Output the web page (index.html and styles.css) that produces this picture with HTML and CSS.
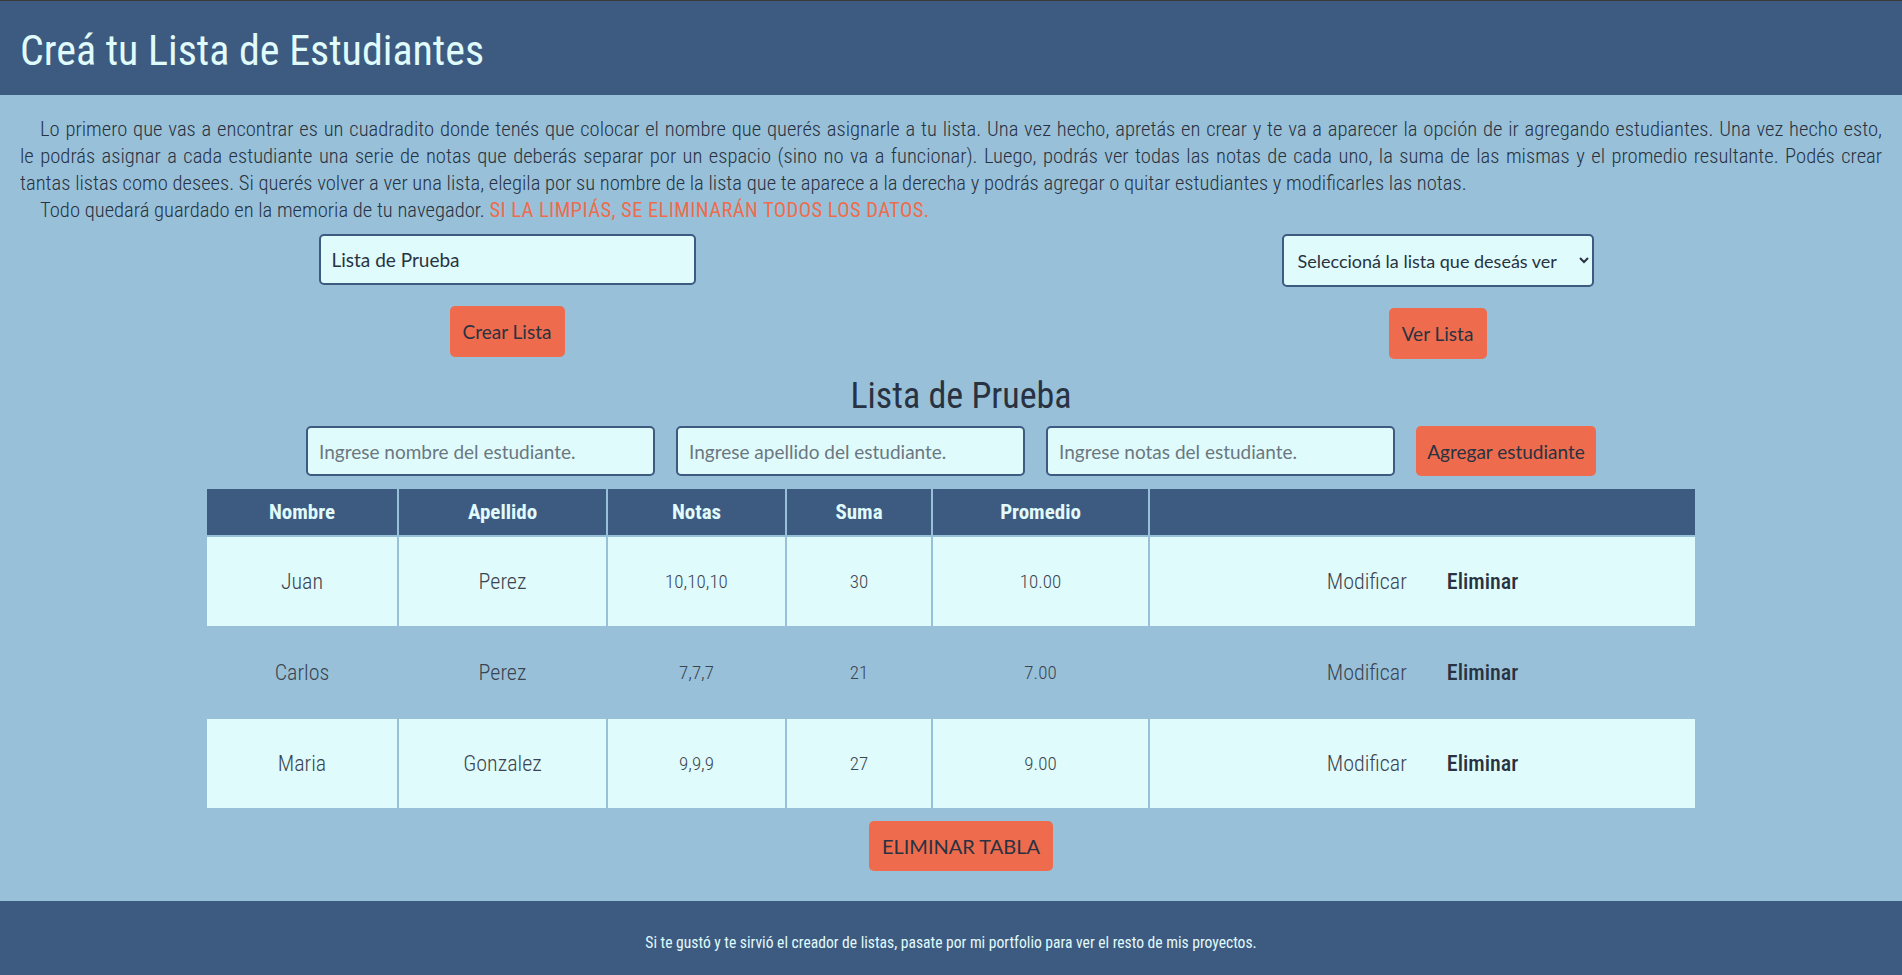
FILE: index.html
```html
<!DOCTYPE html>
<html lang="es">
<head>
<meta charset="utf-8">
<title>Creá tu Lista de Estudiantes</title>
<link rel="stylesheet" href="styles.css">
</head>
<body>
<header class="top">
  <h1 class="title">Creá tu Lista de Estudiantes</h1>
</header>
<main class="main">
  <section class="intro">
    <p class="para"><span class="line">Lo primero que vas a encontrar es un cuadradito donde tenés que colocar el nombre que querés asignarle a tu lista. Una vez hecho, apretás en crear y te va a aparecer la opción de ir agregando estudiantes. Una vez hecho esto,</span> <span class="line">le podrás asignar a cada estudiante una serie de notas que deberás separar por un espacio (sino no va a funcionar). Luego, podrás ver todas las notas de cada uno, la suma de las mismas y el promedio resultante. Podés crear</span> <span class="line last">tantas listas como desees. Si querés volver a ver una lista, elegila por su nombre de la lista que te aparece a la derecha y podrás agregar o quitar estudiantes y modificarles las notas.</span></p>
    <p class="para"><span class="line last">Todo quedará guardado en la memoria de tu navegador. <span class="warn">SI LA LIMPIÁS, SE ELIMINARÁN TODOS LOS DATOS.</span></span></p>
  </section>

  <section class="controls">
    <div class="col">
      <input class="field field-list" type="text" value="Lista de Prueba">
      <button class="btn btn-create">Crear Lista</button>
    </div>
    <div class="col">
      <select class="field field-select">
        <option>Seleccioná la lista que deseás ver</option>
      </select>
      <button class="btn btn-view">Ver Lista</button>
    </div>
  </section>

  <h2 class="list-title">Lista de Prueba</h2>

  <div class="add-row">
    <input class="field field-student" type="text" placeholder="Ingrese nombre del estudiante.">
    <input class="field field-student" type="text" placeholder="Ingrese apellido del estudiante.">
    <input class="field field-student" type="text" placeholder="Ingrese notas del estudiante.">
    <button class="btn btn-add">Agregar estudiante</button>
  </div>

  <table class="grid">
    <thead>
      <tr>
        <th class="c1">Nombre</th>
        <th class="c2">Apellido</th>
        <th class="c3">Notas</th>
        <th class="c4">Suma</th>
        <th class="c5">Promedio</th>
        <th class="c6"></th>
      </tr>
    </thead>
    <tbody>
      <tr class="odd">
        <td>Juan</td><td>Perez</td><td class="num">10,10,10</td><td class="num">30</td><td class="num">10.00</td>
        <td><div class="actions"><button class="link">Modificar</button><button class="link strong">Eliminar</button></div></td>
      </tr>
      <tr class="even">
        <td>Carlos</td><td>Perez</td><td class="num">7,7,7</td><td class="num">21</td><td class="num">7.00</td>
        <td><div class="actions"><button class="link">Modificar</button><button class="link strong">Eliminar</button></div></td>
      </tr>
      <tr class="odd">
        <td>Maria</td><td>Gonzalez</td><td class="num">9,9,9</td><td class="num">27</td><td class="num">9.00</td>
        <td><div class="actions"><button class="link">Modificar</button><button class="link strong">Eliminar</button></div></td>
      </tr>
    </tbody>
  </table>

  <div class="bottom">
    <button class="btn btn-clear">ELIMINAR TABLA</button>
  </div>
</main>
<footer class="foot">
  <p class="foot-text">Si te gustó y te sirvió el creador de listas, pasate por mi portfolio para ver el resto de mis proyectos.</p>
</footer>
</body>
</html>
```

FILE: styles.css
```css
* { box-sizing: border-box; }

html, body {
  margin: 0;
  padding: 0;
}

body {
  background: #98c1d9;
  color: #293241;
  font-family: Roboto, "Liberation Sans", sans-serif;
  font-stretch: 75%;
  overflow-x: hidden;
}

.top {
  background: #3d5a80;
  height: 95px;
  border-top: 1px solid #3a3a3a;
  display: flex;
  align-items: center;
  padding: 0 20px;
}

.title {
  margin: 0;
  color: #e0fbfc;
  font-size: 42px;
  font-weight: 400;
  padding-top: 4px;
}

.main {
  padding: 21px 0 30px;
}

.intro {
  padding: 0 20px;
}

.para {
  margin: 0;
  font-size: 20.6px;
  font-weight: 300;
  line-height: 27px;
  color: #293241;
}

.line {
  display: block;
  text-align: justify;
  text-align-last: justify;
}

.line:first-child {
  text-indent: 20px;
}

.line.last {
  text-align-last: auto;
}

.warn {
  color: #ee6c4d;
  font-weight: 400;
  font-stretch: 87.5%;
  letter-spacing: 0.4px;
}

.controls {
  display: grid;
  grid-template-columns: 932px 1fr;
  padding-left: 41px;
  margin-top: 10px;
}

.col {
  display: flex;
  flex-direction: column;
  align-items: center;
  gap: 21px;
}

.field {
  background: #e0fbfc;
  border: 2px solid #3d5a80;
  border-radius: 5px;
  color: #293241;
  font-family: Lato, "Liberation Sans", sans-serif;
  font-size: 19px;
  padding: 0 11px;
  height: 51px;
  outline: none;
}

.field::placeholder {
  color: #6b7780;
}

.field-list {
  width: 377px;
}

.field-select {
  width: 312px;
  height: 53px;
  padding: 0 10px;
  font-size: 18px;
}

.btn {
  background: #ee6c4d;
  border: none;
  border-radius: 5px;
  color: #293241;
  font-family: Lato, "Liberation Sans", sans-serif;
  font-size: 19px;
  height: 51px;
  padding: 0 10px;
}

.btn-create { width: 115px; }
.btn-view { width: 98px; }

.list-title {
  margin: 15px 0 0;
  text-align: center;
  padding-left: 20px;
  font-size: 36px;
  font-weight: 400;
  line-height: 44px;
}

.add-row {
  display: flex;
  justify-content: center;
  gap: 21px;
  margin-top: 8px;
}

.field-student {
  width: 349px;
  height: 50px;
}

.btn-add {
  width: 180px;
  height: 50px;
  white-space: nowrap;
}

.grid {
  margin: 11px auto 0;
  border-collapse: separate;
  border-spacing: 2px;
  width: 1492px;
}

.grid th {
  background: #3d5a80;
  color: #e0fbfc;
  font-size: 21px;
  font-weight: 700;
  height: 46px;
  padding: 0;
}

.c1 { width: 190px; }
.c2 { width: 207px; }
.c3 { width: 177px; }
.c4 { width: 144px; }
.c5 { width: 215px; }

.grid td {
  text-align: center;
  height: 89px;
  padding: 0;
  color: #3b4450;
  font-size: 22px;
  font-weight: 300;
}

.odd td {
  background: #e0fbfc;
}

.grid td.num {
  font-size: 19px;
}

.actions {
  display: flex;
  justify-content: center;
  gap: 40px;
}

.link {
  background: none;
  border: none;
  font-family: inherit;
  font-stretch: 75%;
  font-size: 22px;
  font-weight: 300;
  color: #3b4450;
  padding: 0;
}

.link.strong {
  color: #293241;
  font-weight: 500;
}

.bottom {
  display: flex;
  justify-content: center;
  padding-left: 20px;
  margin-top: 11px;
}

.btn-clear {
  width: 184px;
  height: 50px;
  font-size: 20px;
  white-space: nowrap;
}

.foot {
  background: #3d5a80;
  height: 74px;
  display: flex;
  align-items: center;
  justify-content: center;
  padding-top: 9px;
}

.foot-text {
  margin: 0;
  color: #e0fbfc;
  font-size: 15.6px;
}
```
